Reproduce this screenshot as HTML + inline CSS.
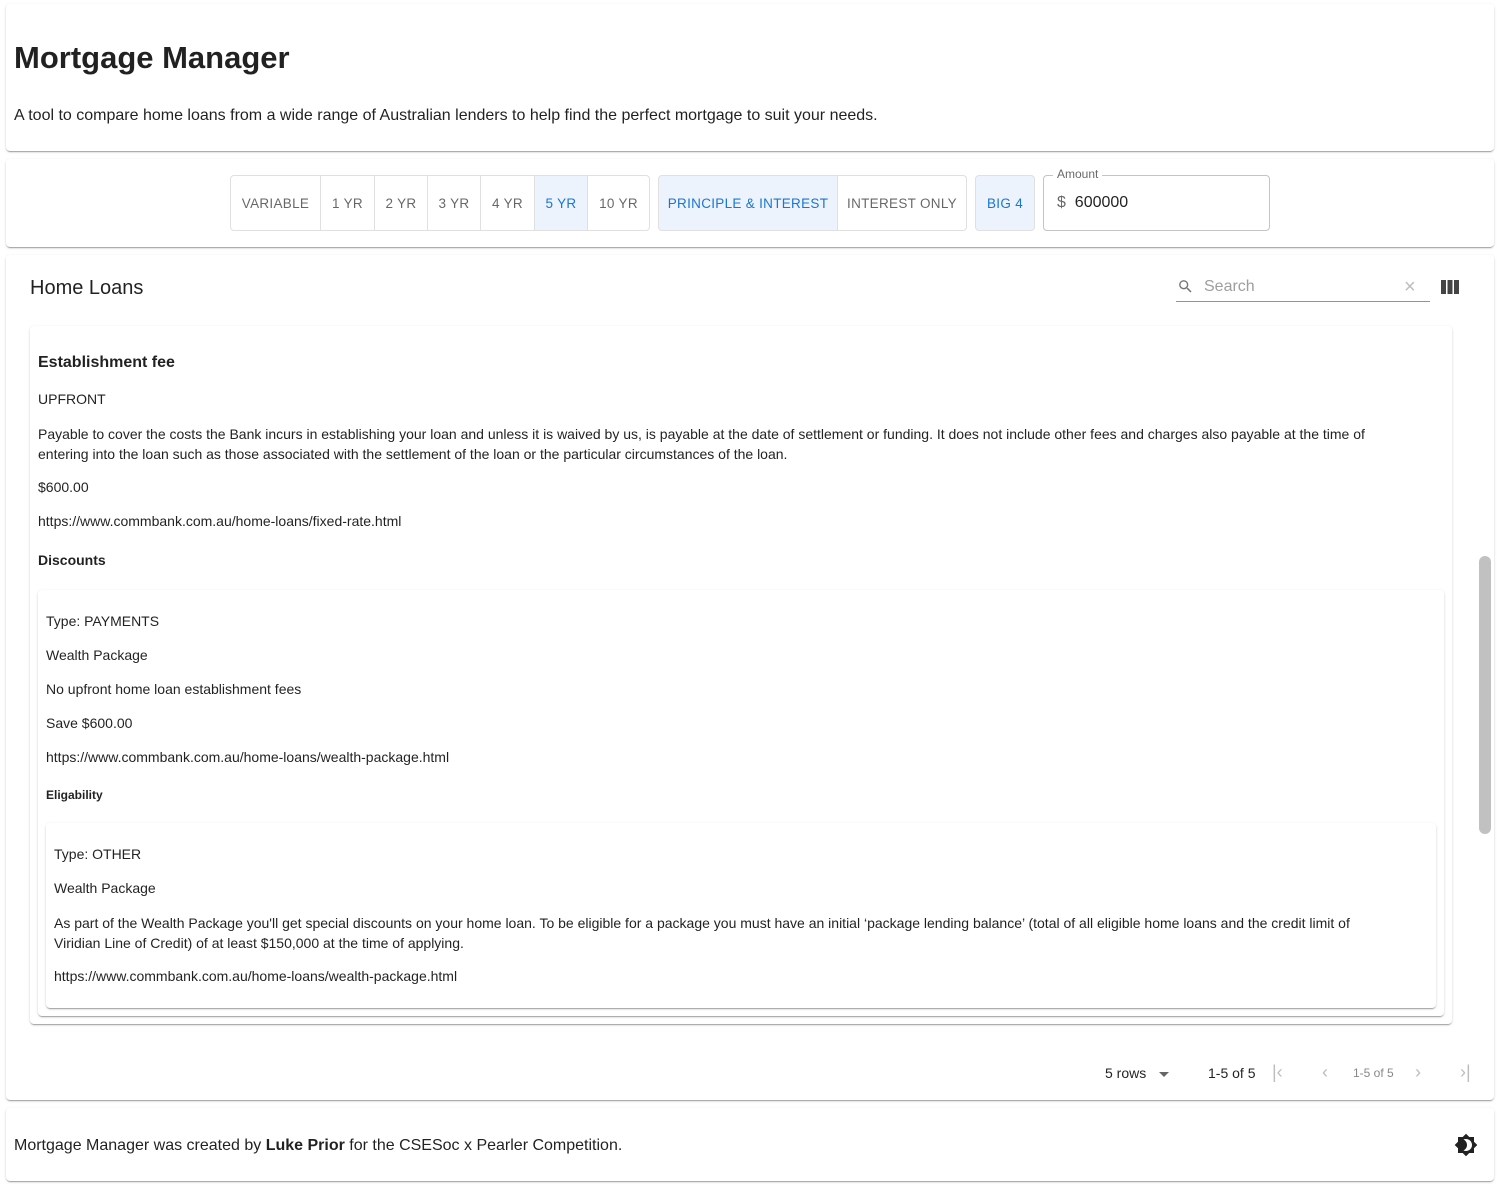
<!DOCTYPE html>
<html><head><meta charset="utf-8"><style>
*{box-sizing:border-box;margin:0;padding:0}
body{width:1500px;height:1189px;background:#fff;font-family:"Liberation Sans",sans-serif;color:rgba(0,0,0,.87);position:relative;overflow:hidden}
.card{position:absolute;background:#fff;border-radius:4px;box-shadow:0 2px 1px -1px rgba(0,0,0,.2),0 1px 1px 0 rgba(0,0,0,.14),0 1px 3px 0 rgba(0,0,0,.12)}
.a{position:absolute;white-space:nowrap}
.btn{position:absolute;top:175px;height:56px;border:1px solid #e0e0e0;display:flex;align-items:center;justify-content:center;font-size:13.5px;color:rgba(0,0,0,.6);letter-spacing:.3px}
.sel{background:#edf3fc;color:#1976d2}
.t{font-size:14px;position:absolute;white-space:nowrap}
</style></head><body>
<div class="card" style="left:6px;top:4px;width:1488px;height:147px"></div>
<div class="a" style="left:14px;top:40px;font-size:31px;font-weight:bold">Mortgage Manager</div>
<div class="a" style="left:14px;top:107px;font-size:16px">A tool to compare home loans from a wide range of Australian lenders to help find the perfect mortgage to suit your needs.</div>

<div class="card" style="left:6px;top:159px;width:1488px;height:88px"></div>
<div class="btn" style="left:230px;width:91px;border-radius:4px 0 0 4px">VARIABLE</div>
<div class="btn" style="left:320px;width:55px">1 YR</div>
<div class="btn" style="left:374px;width:54px">2 YR</div>
<div class="btn" style="left:427px;width:54px">3 YR</div>
<div class="btn" style="left:480px;width:55px">4 YR</div>
<div class="btn sel" style="left:534px;width:54px">5 YR</div>
<div class="btn" style="left:587px;width:63px;border-radius:0 4px 4px 0">10 YR</div>
<div class="btn sel" style="left:658px;width:180px;border-radius:4px 0 0 4px">PRINCIPLE &amp; INTEREST</div>
<div class="btn" style="left:837px;width:130px;border-radius:0 4px 4px 0">INTEREST ONLY</div>
<div class="btn sel" style="left:975px;width:60px;border-radius:4px">BIG 4</div>
<div style="position:absolute;left:1043px;top:175px;width:227px;height:56px;border:1px solid #c4c4c4;border-radius:4px"></div>
<div class="a" style="left:1053px;top:167px;background:#fff;padding:0 4px;font-size:12px;color:rgba(0,0,0,.6)">Amount</div>
<div class="a" style="left:1057px;top:194px;font-size:16px"><span style="color:rgba(0,0,0,.6)">$</span>&nbsp; 600000</div>

<div class="card" style="left:6px;top:255px;width:1488px;height:845px"></div>
<div class="a" style="left:30px;top:277px;font-size:20px;font-weight:500">Home Loans</div>
<svg class="a" style="left:1177px;top:278px" width="17" height="17" viewBox="0 0 24 24"><path fill="#757575" d="M15.5 14h-.79l-.28-.27A6.470 6.470 0 0016 9.5 6.5 6.5 0 109.5 16c1.61 0 3.09-.59 4.230-1.57l.27.28v.79l5 4.99L20.49 19l-4.99-5zm-6 0C7.01 14 5 11.99 5 9.5S7.01 5 9.5 5 14 7.01 14 9.5 11.99 14 9.5 14z"/></svg>
<div class="a" style="left:1204px;top:278px;font-size:16px;color:#9e9e9e">Search</div>
<div class="a" style="left:1404px;top:276px;font-size:20px;color:#bdbdbd">×</div>
<div style="position:absolute;left:1176px;top:301px;width:254px;height:1px;background:#949494"></div>
<svg class="a" style="left:1440px;top:278px" width="20" height="18" viewBox="0 0 20 18"><rect x="1" y="2" width="5" height="14" fill="#444"/><rect x="7.5" y="2" width="5" height="14" fill="#444"/><rect x="14" y="2" width="5" height="14" fill="#444"/></svg>

<div class="card" style="left:30px;top:326px;width:1422px;height:698px"></div>
<div class="a" style="left:38px;top:354px;font-size:16px;font-weight:bold">Establishment fee</div>
<div class="t" style="left:38px;top:391px">UPFRONT</div>
<div class="t" style="left:38px;top:424px;white-space:normal;width:1380px;line-height:20px">Payable to cover the costs the Bank incurs in establishing your loan and unless it is waived by us, is payable at the date of settlement or funding. It does not include other fees and charges also payable at the time of entering into the loan such as those associated with the settlement of the loan or the particular circumstances of the loan.</div>
<div class="t" style="left:38px;top:479px">$600.00</div>
<div class="t" style="left:38px;top:513px">https://www.commbank.com.au/home-loans/fixed-rate.html</div>
<div class="t" style="left:38px;top:552px;font-weight:bold">Discounts</div>

<div class="card" style="left:38px;top:590px;width:1406px;height:426px"></div>
<div class="t" style="left:46px;top:613px">Type: PAYMENTS</div>
<div class="t" style="left:46px;top:647px">Wealth Package</div>
<div class="t" style="left:46px;top:681px">No upfront home loan establishment fees</div>
<div class="t" style="left:46px;top:715px">Save $600.00</div>
<div class="t" style="left:46px;top:749px">https://www.commbank.com.au/home-loans/wealth-package.html</div>
<div class="t" style="left:46px;top:788px;font-size:12px;font-weight:bold">Eligability</div>

<div class="card" style="left:46px;top:823px;width:1390px;height:185px"></div>
<div class="t" style="left:54px;top:846px">Type: OTHER</div>
<div class="t" style="left:54px;top:880px">Wealth Package</div>
<div class="t" style="left:54px;top:913px;white-space:normal;width:1340px;line-height:20px">As part of the Wealth Package you'll get special discounts on your home loan. To be eligible for a package you must have an initial ‘package lending balance’ (total of all eligible home loans and the credit limit of Viridian Line of Credit) of at least $150,000 at the time of applying.</div>
<div class="t" style="left:54px;top:968px">https://www.commbank.com.au/home-loans/wealth-package.html</div>

<div style="position:absolute;left:1479px;top:556px;width:12px;height:278px;background:#c1c1c1;border-radius:6px"></div>

<div class="t" style="left:1105px;top:1065px">5 rows</div>
<div class="a" style="left:1159px;top:1072px;border-left:5px solid transparent;border-right:5px solid transparent;border-top:5px solid #666"></div>
<div class="t" style="left:1208px;top:1065px">1-5 of 5</div>
<div class="a" style="left:1272px;top:1062px;font-size:18px;color:#bdbdbd">|‹</div>
<div class="a" style="left:1322px;top:1062px;font-size:18px;color:#bdbdbd">‹</div>
<div class="a" style="left:1353px;top:1066px;font-size:12px;color:#888">1-5 of 5</div>
<div class="a" style="left:1415px;top:1062px;font-size:18px;color:#bdbdbd">›</div>
<div class="a" style="left:1460px;top:1062px;font-size:18px;color:#bdbdbd">›|</div>

<div class="card" style="left:6px;top:1108px;width:1488px;height:73px"></div>
<div class="a" style="left:14px;top:1137px;font-size:16px">Mortgage Manager was created by <b>Luke Prior</b> for the CSESoc x Pearler Competition.</div>
<svg class="a" style="left:1454px;top:1133px" width="24" height="24" viewBox="0 0 24 24"><path fill="#222" d="M20 8.69V4h-4.69L12 .69 8.69 4H4v4.69L.69 12 4 15.31V20h4.69L12 23.31 15.31 20H20v-4.69L23.31 12 20 8.69zM12 18c-.89 0-1.74-.2-2.5-.55C11.56 16.5 13 14.42 13 12s-1.44-4.5-3.5-5.45C10.26 6.2 11.11 6 12 6c3.31 0 6 2.690 6 6s-2.69 6-6 6z"/></svg>
</body></html>
